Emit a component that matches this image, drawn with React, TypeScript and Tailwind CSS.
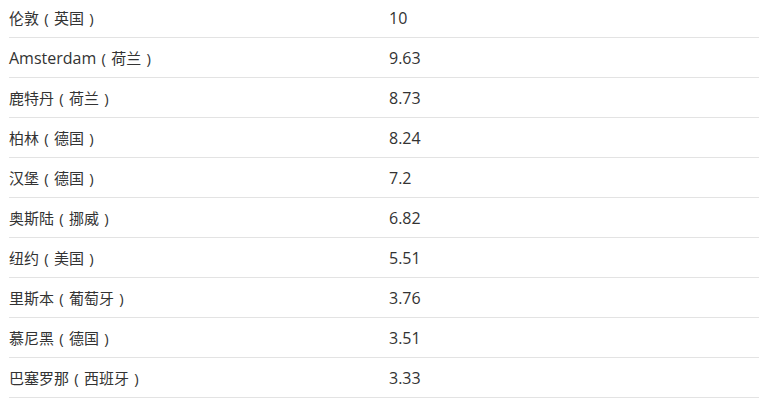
const rows: [string, string][] = [
  ["伦敦（英国）", "10"],
  ["Amsterdam（荷兰）", "9.63"],
  ["鹿特丹（荷兰）", "8.73"],
  ["柏林（德国）", "8.24"],
  ["汉堡（德国）", "7.2"],
  ["奥斯陆（挪威）", "6.82"],
  ["纽约（美国）", "5.51"],
  ["里斯本（葡萄牙）", "3.76"],
  ["慕尼黑（德国）", "3.51"],
  ["巴塞罗那（西班牙）", "3.33"],
];

// 全角括号居中显示，拉丁字母略大一号
function City({ name }: { name: string }) {
  const parts = name.split(/([（）])/);
  return (
    <>
      {parts.map((p, i) =>
        p === "（" || p === "）" ? (
          <span key={i} className="inline-block w-[15px] text-center">
            {p === "（" ? "(" : ")"}
          </span>
        ) : /^[A-Za-z]+$/.test(p) ? (
          <span key={i} className="text-[16px]">{p}</span>
        ) : (
          <span key={i}>{p}</span>
        )
      )}
    </>
  );
}

export default function App() {
  return (
    <div className="bg-white w-[768px] h-[403px] overflow-hidden">
      <div
        className="ml-[9px] w-[750px] -mt-[2px] text-[15px] text-[#333]"
        style={{ fontFamily: '"Open Sans", "Noto Sans CJK SC", sans-serif' }}
      >
        {rows.map(([city, value]) => (
          <div key={city} className="grid grid-cols-[380px_1fr] h-[40px] items-center pt-[1px] border-b border-[#e3e3e3]">
            <div className="leading-[22px]">
              <City name={city} />
            </div>
            <div className="text-[16px] leading-[22px]">{value}</div>
          </div>
        ))}
      </div>
    </div>
  );
}
